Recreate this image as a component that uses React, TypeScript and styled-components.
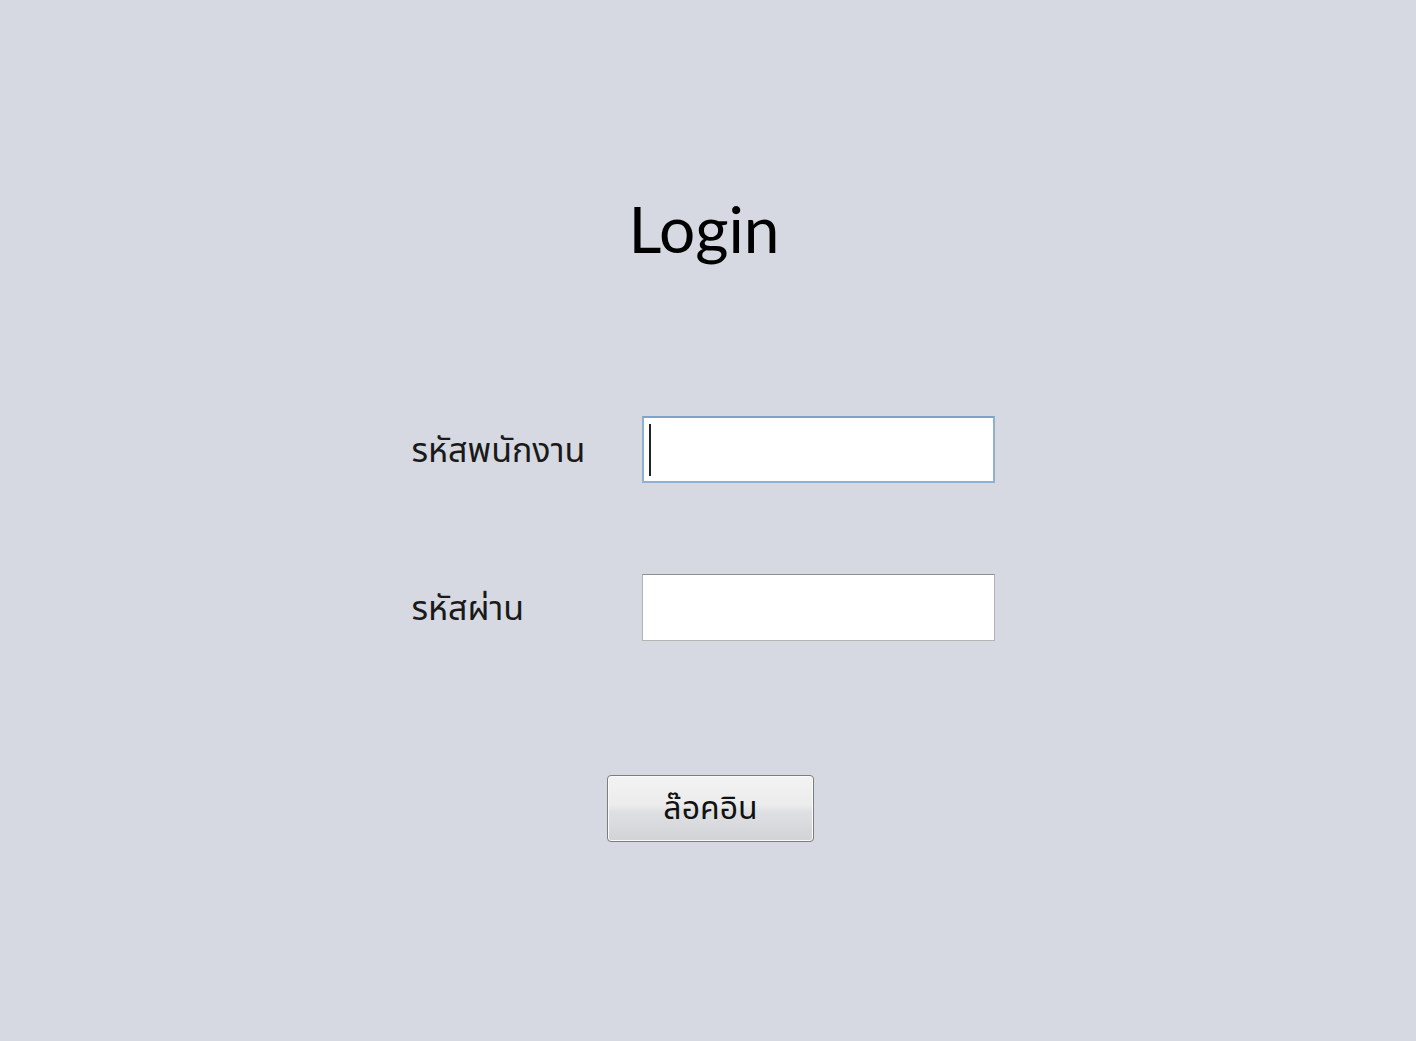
import styled, { createGlobalStyle } from 'styled-components'

const GlobalStyle = createGlobalStyle`
  html, body {
    margin: 0;
    padding: 0;
    background: #d6d9e1;
  }
`

const Page = styled.div`
  box-sizing: border-box;
  width: 1416px;
  height: 1041px;
  padding-right: 10px;
  background: #d6d9e1;
  display: flex;
  flex-direction: column;
  align-items: center;
  font-family: 'Noto Sans Thai', 'Noto Sans', 'DejaVu Sans', sans-serif;
  color: #111;
`

const Title = styled.h1`
  margin: 184px 0 0 2px;
  font-family: 'Lato', 'Open Sans', sans-serif;
  font-weight: 400;
  font-size: 64px;
  line-height: 90px;
  color: #000;
`

const Form = styled.div`
  margin-top: 142px;
  display: grid;
  grid-template-columns: 230px 353px;
  row-gap: 91px;
  align-items: center;
`

const Label = styled.label`
  font-size: 34px;
  line-height: 40px;
  padding-top: 4px;
  color: #1a1a1a;
`

const Field = styled.input<{ focused?: boolean }>`
  box-sizing: border-box;
  width: 353px;
  height: 67px;
  padding: 0 7px;
  font-size: 32px;
  background: #fff;
  border: ${(p) => (p.focused ? '2px solid #8fb0d4' : '1px solid #b4b4b4')};
  border-top-color: ${(p) => (p.focused ? '#7ea3cc' : '#8f8f8f')};
  outline: none;
`

const Caret = styled.span`
  position: absolute;
  left: 7px;
  top: 8px;
  width: 2px;
  height: 52px;
  background: #222;
`

const FieldWrap = styled.div`
  position: relative;
  width: 353px;
`

const Actions = styled.div`
  margin-top: 134px;
  padding-left: 15px;
`

const Button = styled.button`
  width: 207px;
  height: 67px;
  border: 1px solid #7d7d7d;
  border-radius: 4px;
  background: linear-gradient(#f3f3f3 0%, #ececed 45%, #dfe0e3 55%, #d2d3d7 100%);
  box-shadow: inset 0 0 0 1px #fafafa;
  font-family: 'Noto Sans Thai', 'Noto Sans', sans-serif;
  font-size: 32px;
  color: #111;
  padding: 0;
`

export default function App() {
  return (
    <Page>
      <GlobalStyle />
      <Title>Login</Title>
      <Form>
        <Label>รหัสพนักงาน</Label>
        <FieldWrap>
          <Field focused />
          <Caret />
        </FieldWrap>
        <Label>รหัสผ่าน</Label>
        <FieldWrap>
          <Field type="password" />
        </FieldWrap>
      </Form>
      <Actions>
        <Button>ล๊อคอิน</Button>
      </Actions>
    </Page>
  )
}
